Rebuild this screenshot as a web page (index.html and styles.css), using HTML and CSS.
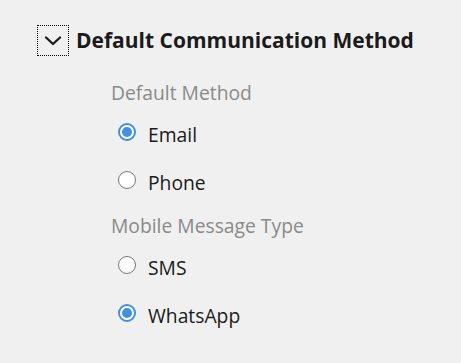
FILE: index.html
```html
<!DOCTYPE html>
<html lang="en">
<head>
<meta charset="utf-8">
<link rel="stylesheet" href="styles.css">
</head>
<body>
<section class="panel">
  <div class="panel-header">
    <button class="toggle" type="button" aria-expanded="true">
      <svg width="18" height="10" viewBox="0 0 18 10"><path d="M2 1.5 L9 8 L16 1.5" fill="none" stroke="#1a1a1a" stroke-width="2.3" stroke-linecap="round" stroke-linejoin="round"/></svg>
    </button>
    <h2 class="title">Default Communication Method</h2>
  </div>
  <div class="panel-body">
    <div class="group">
      <div class="group-label">Default Method</div>
      <label class="option"><span class="radio checked"></span><span class="option-text">Email</span></label>
      <label class="option"><span class="radio"></span><span class="option-text">Phone</span></label>
    </div>
    <div class="group second">
      <div class="group-label">Mobile Message Type</div>
      <label class="option"><span class="radio"></span><span class="option-text">SMS</span></label>
      <label class="option"><span class="radio checked"></span><span class="option-text">WhatsApp</span></label>
    </div>
  </div>
</section>
</body>
</html>
```
FILE: styles.css
```css
html, body {
  margin: 0;
  padding: 0;
  background: #f0f0f0;
}
body {
  font-family: "Open Sans", "Noto Sans", sans-serif;
  color: #1b1b1b;
}
.panel {
  padding: 25px 0 0 37px;
}
.panel-header {
  display: flex;
  align-items: center;
  gap: 7px;
}
.toggle {
  width: 32px;
  height: 31px;
  border: 1px dotted #000;
  background: transparent;
  padding: 0;
  margin: 0;
  display: flex;
  align-items: center;
  justify-content: center;
}
.title {
  margin: 0;
  font-size: 21px;
  font-weight: 700;
  line-height: 31px;
}
.panel-body {
  padding-left: 74px;
  margin-top: 25px;
}
.group-label {
  font-size: 19.3px;
  line-height: 24px;
  color: #8a8a8a;
  margin-bottom: 6px;
}
.group.second {
  margin-top: 7px;
}
.option {
  display: flex;
  align-items: flex-start;
  height: 48px;
  box-sizing: border-box;
  padding-top: 12px;
  padding-left: 7px;
  gap: 12px;
}
.option-text {
  font-size: 19.3px;
  line-height: 24px;
}
.radio {
  width: 18px;
  height: 18px;
  box-sizing: border-box;
  border: 1.5px solid #777;
  border-radius: 50%;
  background: #fff;
  margin-top: 0;
  flex: none;
  position: relative;
}
.radio.checked {
  border: 2px solid #4390df;
}
.radio.checked::after {
  content: "";
  position: absolute;
  left: 2px;
  top: 2px;
  width: 10px;
  height: 10px;
  border-radius: 50%;
  background: #4390df;
}
```
